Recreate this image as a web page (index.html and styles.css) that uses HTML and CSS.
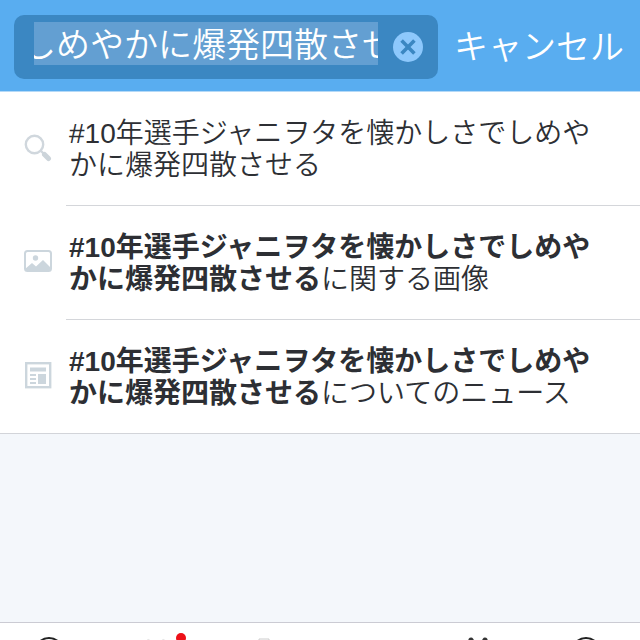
FILE: index.html
```html
<!DOCTYPE html>
<html lang="ja">
<head>
<meta charset="utf-8">
<meta name="viewport" content="width=device-width, initial-scale=1">
<title>検索</title>
<link rel="stylesheet" href="styles.css">
</head>
<body>
<header class="bar">
  <div class="field">
    <input class="query" type="text" aria-label="検索" value="しめやかに爆発四散させる">
    <button class="clear" type="button" aria-label="消去">
      <svg viewBox="0 0 30 30" width="30" height="30"><circle cx="15" cy="15" r="15" fill="#8dc8fc"/><path d="M8.600 8.600l12.800 12.800M21.400 8.600l-12.800 12.800" stroke="#3b87c2" stroke-width="3.600"/></svg>
    </button>
  </div>
  <button class="cancel" type="button">キャンセル</button>
</header>
<main>
  <ul class="results">
    <li class="row">
      <svg class="icon" viewBox="0 0 28 28"><circle cx="10.500" cy="10.500" r="8.700" fill="none" stroke="#d0d7dd" stroke-width="2.400"/><path d="M16.500 16.500l4 4" stroke="#d0d7dd" stroke-width="2.400"/><path d="M20.500 20.500l4 4" stroke="#ccd4da" stroke-width="5" stroke-linecap="round"/></svg>
      <a class="text" href="#search">#10年選手ジャニヲタを懐かしさでしめやかに爆発四散させる</a>
    </li>
    <li class="row">
      <svg class="icon" viewBox="0 0 28 28"><rect x="1" y="4" width="26" height="20" rx="2.500" fill="#fff" stroke="#ccd6dd" stroke-width="2"/><circle cx="11.500" cy="11" r="2.700" fill="#ccd6dd"/><path d="M1 22l7-6 4 3.500 7-6.500 8 8v3H2z" fill="#ccd6dd"/></svg>
      <a class="text" href="#images"><b>#10年選手ジャニヲタを懐かしさでしめやかに爆発四散させる</b>に関する画像</a>
    </li>
    <li class="row">
      <svg class="icon" viewBox="0 0 28 28"><rect x="2.200" y="2.200" width="24" height="24" fill="#fff" stroke="#ccd6dd" stroke-width="2.400"/><path d="M6 6.500h16v4H6zM14 13h8v10h-8zM6 13h6v2H6zM6 17h6v2H6zM6 21h6v2H6z" fill="#ccd6dd"/></svg>
      <a class="text" href="#news"><b>#10年選手ジャニヲタを懐かしさでしめやかに爆発四散させる</b>についてのニュース</a>
    </li>
  </ul>
</main>
<nav class="tabs">
  <button class="tab" type="button" aria-label="アカウント"><svg viewBox="0 0 30 30"><circle cx="15" cy="16" r="14" fill="none" stroke="#222" stroke-width="2"/></svg></button>
  <button class="tab" type="button" aria-label="リスト"><svg viewBox="0 0 30 30"><path d="M5 28V5q2-3 5 0v23M20 28V5q2-3 5 0v23" fill="none" stroke="#ddd" stroke-width="1"/></svg><span class="dot"></span></button>
  <button class="tab" type="button" aria-label="一覧"><svg viewBox="0 0 30 30"><path d="M10 29V3h10v26z" fill="none" stroke="#ccc" stroke-width="1"/></svg></button>
  <button class="tab" type="button" aria-label="作成"><svg viewBox="0 0 30 30"><path d="M4 27V5h22v22z" fill="none" stroke="#ddd" stroke-width="1"/></svg></button>
  <button class="tab" type="button" aria-label="ユーザー"><svg viewBox="0 0 30 30"><path d="M7 4l14 24M21 4l-14 24" fill="none" stroke="#333" stroke-width="5" stroke-linecap="round"/></svg></button>
  <button class="tab" type="button" aria-label="その他"><svg viewBox="0 0 30 30"><circle cx="15" cy="16" r="14" fill="none" stroke="#222" stroke-width="2"/></svg></button>
</nav>
</body>
</html>
```
FILE: styles.css
```css
* { box-sizing: border-box; }
body {
  margin: 0;
  height: 100vh;
  display: flex;
  flex-direction: column;
  overflow: hidden;
  background: #f4f7fb;
  color: #2d2f34;
  font-family: "Liberation Sans", "Noto Sans CJK JP", sans-serif;
}
button {
  border: 0;
  padding: 0;
  background: none;
  font: inherit;
  color: inherit;
}
.bar {
  display: flex;
  align-items: center;
  gap: 16px;
  padding: 15px 16px 12px 14px;
  background: #59adf0;
  border-bottom: 1px solid #b4d9f7;
}
.field {
  flex: 1;
  min-width: 0;
  height: 64px;
  display: flex;
  align-items: center;
  gap: 15px;
  padding: 0 15px 0 20px;
  border-radius: 10px;
  background: #3b87c2;
}
.query {
  flex: 1;
  min-width: 0;
  height: 43px;
  margin-bottom: 7px;
  border: 0;
  padding: 0 0 2px;
  text-indent: -12px;
  font: 350 34px "Noto Sans CJK JP", sans-serif;
  color: #fff;
  background: #639fd2;
}
.clear { display: flex; }
.cancel {
  padding-bottom: 4px;
  font-family: "Noto Sans CJK JP", sans-serif;
  font-size: 34px;
  font-weight: 350;
  line-height: 60px;
  color: #fff;
}
.results {
  margin: 0;
  padding: 0;
  list-style: none;
  background: #fff;
  border-bottom: 1px solid #d2d4d9;
}
.row {
  display: flex;
  align-items: center;
  gap: 14px;
  padding-left: 24px;
}
.icon {
  width: 28px;
  height: 28px;
  margin-bottom: 2px;
  flex: none;
}
.text {
  flex: 1;
  padding: 26px 24px 23px 3px;
  font-size: 28px;
  font-weight: 350;
  line-height: 32px;
  color: inherit;
  text-decoration: none;
}
.text b { font-weight: 700; }
.row + .row .text { border-top: 1px solid #d4d6da; }
.tabs {
  display: flex;
  justify-content: space-between;
  height: 18px;
  margin-top: auto;
  padding: 13px 39px 0 34px;
  background: #fff;
  border-top: 1px solid #cbcbd3;
}
.tab {
  position: relative;
  width: 30px;
  height: 30px;
}
.tab svg { display: block; width: 30px; height: 30px; }
.dot {
  position: absolute;
  top: -3px;
  right: -15px;
  width: 10px;
  height: 10px;
  border-radius: 50%;
  background: #ed1018;
}
```
